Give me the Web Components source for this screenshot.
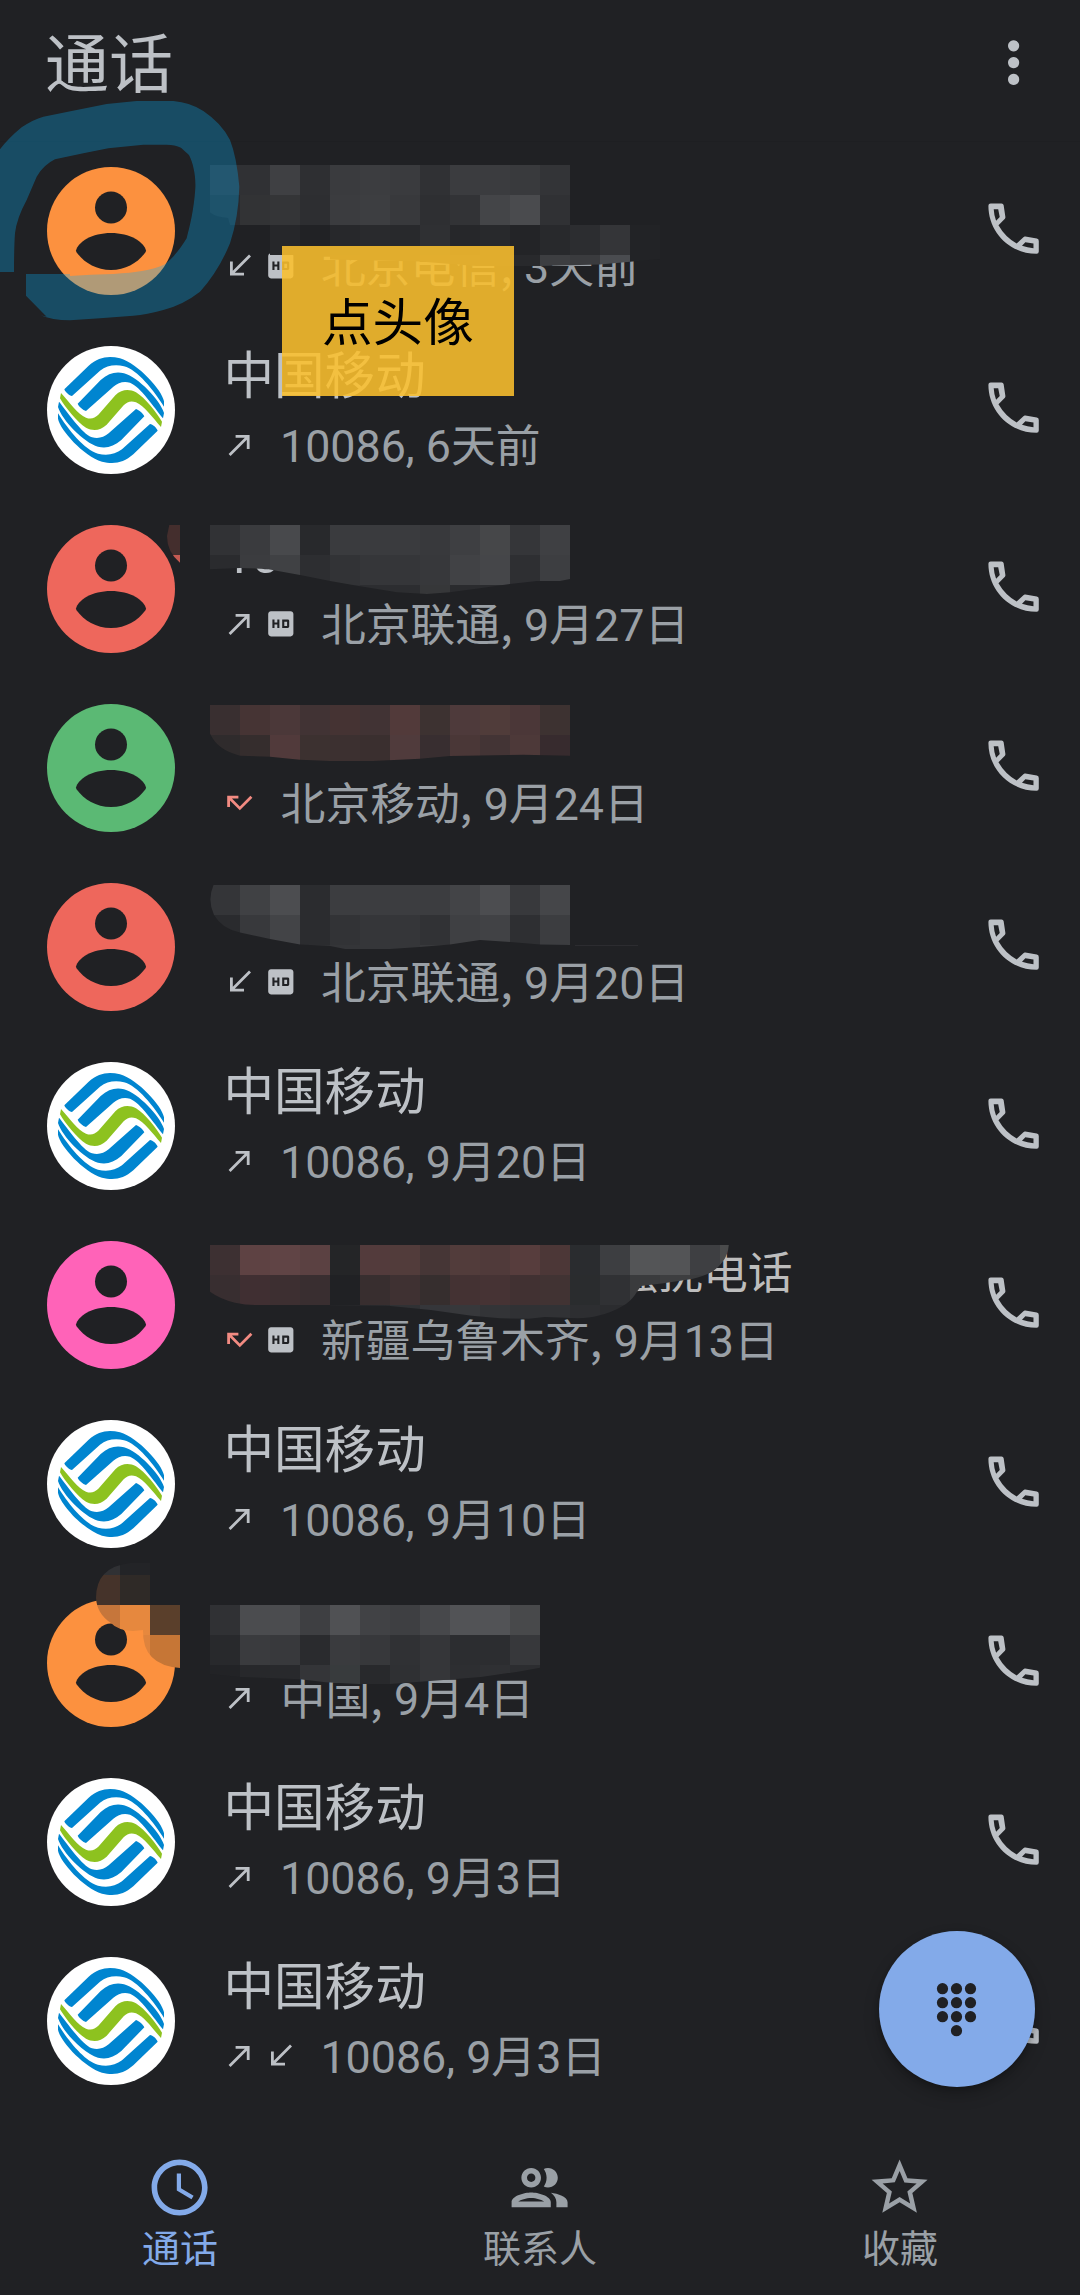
<!DOCTYPE html>
<html lang="zh-CN">
<head>
<meta charset="utf-8">
<title>通话</title>
<style>
  html, body { margin: 0; background: #202124; }
  body { font-family: Roboto, "Noto Sans CJK SC", sans-serif; }
</style>
</head>
<body>
<phone-screen></phone-screen>

<script>
const BG = '#202124';

const ICONS = {
  made: 'M9 5v2h6.59L4 18.59 5.41 20 17 8.41V15h2V5z',
  received: 'M20 5.41L18.59 4 7 15.59V9H5v10h10v-2H8.41z',
  missed: 'M19.59 7L12 14.59 6.41 9H11V7H3v8h2v-4.59l7 7 9-9z',
  hd: 'M19 3H5c-1.1 0-2 .9-2 2v14c0 1.1.9 2 2 2h14c1.1 0 2-.9 2-2V5c0-1.1-.9-2-2-2zm-8 12H9.5v-2.5h-2V15H6V9h1.5v2h2V9H11v6zm2-6h4c.55 0 1 .45 1 1v4c0 .55-.45 1-1 1h-4V9zm1.5 4.5h2v-3h-2v3z',
  phone: 'M3.8 3H7.7Q8.35 3 8.45 3.7L9.07 7.9Q9.1 8.2 8.9 8.45L6.6 10.85Q9 15.1 13.1 17.35L15.5 15.05Q15.8 14.75 16.2 14.85L20.3 15.55Q21 15.7 21 16.4V20.2Q21 21 20.2 21C10.7 21 3 13.3 3 3.8Q3 3 3.8 3ZM4.9 5.1Q5 7.3 5.75 9.2L7.05 7.9 6.5 5.1ZM16.2 16.9L15 18.15Q16.9 18.85 19.1 19V17.35Z',
  more: 'M12 4a2 2 0 1 0 .01 0zM12 10a2 2 0 1 0 .01 0zM12 16a2 2 0 1 0 .01 0z',
  clock: 'M11.99 2C6.47 2 2 6.48 2 12s4.47 10 9.99 10C17.52 22 22 17.52 22 12S17.52 2 11.99 2zM12 20c-4.42 0-8-3.58-8-8s3.58-8 8-8 8 3.58 8 8-3.58 8-8 8zm.5-13H11v6l5.25 3.15.75-1.23-4.5-2.67z',
  people: 'M9 13.75c-2.34 0-7 1.17-7 3.5V19h14v-1.75c0-2.33-4.66-3.5-7-3.5zM4.34 17c.84-.58 2.87-1.25 4.66-1.25s3.82.67 4.66 1.25H4.34zM9 12c1.93 0 3.5-1.57 3.5-3.5S10.93 5 9 5 5.5 6.57 5.5 8.5 7.07 12 9 12zm0-5c.83 0 1.5.67 1.5 1.5S9.83 10 9 10s-1.5-.67-1.5-1.5S8.17 7 9 7zm7.04 6.81c1.16.84 1.96 1.96 1.96 3.44V19h4v-1.75c0-2.02-3.5-3.17-5.96-3.44zM15 12c1.93 0 3.5-1.57 3.5-3.5S16.93 5 15 5c-.54 0-1.04.13-1.5.35.63.89 1 1.98 1 3.15s-.37 2.26-1 3.15c.46.22.96.35 1.5.35z',
  star: 'M22 9.24l-7.19-.62L12 2 9.19 8.63 2 9.24l5.46 4.73L5.82 21 12 17.27 18.18 21l-1.63-7.03L22 9.24zM12 15.4l-3.76 2.27 1-4.28-3.32-2.88 4.38-.38L12 6.1l1.71 4.04 4.38.38-3.32 2.88 1 4.28L12 15.4z'
};

class UiIcon extends HTMLElement {
  connectedCallback() {
    const r = this.attachShadow({ mode: 'open' });
    r.innerHTML = `<style>:host{display:block;width:67.2px;height:67.2px;flex:none}svg{display:block;width:100%;height:100%}</style>
      <svg viewBox="0 0 24 24"><path fill="currentColor" fill-rule="evenodd" d="${ICONS[this.getAttribute('name')]}"/></svg>`;
  }
}

class ContactAvatar extends HTMLElement {
  connectedCallback() {
    const color = this.getAttribute('color');
    const person = `<svg viewBox="0 0 128 128"><circle cx="64" cy="64" r="64" fill="${color}"/>
      <circle cx="64" cy="40.5" r="16" fill="${BG}"/>
      <path fill="${BG}" d="M29 83.5C31 75 45 66 64 66S97 75 99 83.5Q99 84.5 98.3 85.5C91 95.5 79 103 64 103S37 95.5 29.7 85.5Q29 84.5 29 83.5Z"/></svg>`;
    const arcs = `<path d="M193 178L266 107C296 81 325 76 360 85C415 102 486 180 492 214V230C462 182 412 119 372 109C345 102 320 107 300 122L216 198C208 197 196 187 193 178Z"/>
      <path d="M233 221L302 150C325 130 347 124 372 130C415 142 480 210 492 249L489 265C463 233 420 169 390 158C370 153 355 158 340 170L258 243C249 240 236 229 233 221Z"/>`;
    const mobile = `<svg viewBox="141 48 384 384"><circle cx="333" cy="240" r="192" fill="#fff"/>
      <g fill="#0085d0">${arcs}<g transform="rotate(180 333 240)">${arcs}</g></g>
      <path fill="#8dc21f" d="M183 189C210 219 233 252 258 263C274 269 284 264 295 254L346 196C366 177 388 177 408 187C435 203 470 248 486 275L483 291C456 261 433 228 408 217C392 211 382 216 371 226L320 284C300 303 278 303 258 293C231 277 196 232 180 205Z"/></svg>`;
    this.attachShadow({ mode: 'open' }).innerHTML =
      `<style>:host{display:block;width:128px;height:128px;flex:none}svg{display:block}</style>${color ? person : mobile}`;
  }
}

class CallRow extends HTMLElement {
  connectedCallback() {
    const icons = this.getAttribute('icons').split(' ')
      .map(n => `<ui-icon class="${n}" name="${n}"></ui-icon>`).join('');
    const color = this.getAttribute('color') || '';
    this.attachShadow({ mode: 'open' }).innerHTML = `<style>
      :host{display:flex;align-items:center;height:179px;box-sizing:border-box;padding:0 33px 0 47px;color:#bdc1c6}
      .body{flex:1;display:flex;flex-direction:column;padding-left:48.4px;white-space:nowrap}
      .name{height:70px;box-sizing:border-box;padding-top:1.5px;font-size:50.6px;line-height:70px}
      .detail{display:flex;align-items:center;height:70px;font-size:44.8px;line-height:70px;color:#9aa0a6}
      .text{padding-top:3px;white-space:pre}
      .icons{display:flex;gap:6.8px;margin-right:23.6px;color:#bdc1c6}
      :host([number]) .icons{margin-right:23px}
      .icons ui-icon{width:33.6px;height:33.6px}
      .missed{color:#f28b82}
      .call{margin-bottom:5px}
      </style>
      <contact-avatar color="${color}"></contact-avatar>
      <div class="body"><div class="name"><slot name="name"></slot></div>
      <div class="detail"><span class="icons">${icons}</span><span class="text"><slot></slot></span></div></div>
      <ui-icon class="call" name="phone"></ui-icon>`;
  }
}

class AppHeader extends HTMLElement {
  connectedCallback() {
    this.attachShadow({ mode: 'open' }).innerHTML = `<style>
      :host{display:flex;justify-content:space-between;height:141.5px;box-sizing:border-box;padding:0 33px 0 45px;color:#bdc1c6;border-bottom:1px solid #1e1f22}
      .title{font-size:64px;line-height:92px;margin-top:20px}
      ui-icon{margin-top:28.8px}
      </style><span class="title"><slot></slot></span><ui-icon name="more"></ui-icon>`;
  }
}

class NavItem extends HTMLElement {
  connectedCallback() {
    this.attachShadow({ mode: 'open' }).innerHTML = `<style>
      :host{flex:1;display:flex;flex-direction:column;align-items:center;color:#9aa0a6;font-size:38px;line-height:56px}
      :host([active]){color:#83aae9}
      </style><ui-icon name="${this.getAttribute('icon')}"></ui-icon><span><slot></slot></span>`;
  }
}

class BottomNav extends HTMLElement {
  connectedCallback() {
    this.attachShadow({ mode: 'open' }).innerHTML =
      `<style>:host{display:flex;flex:1;padding-top:43px;box-sizing:border-box}</style><slot></slot>`;
  }
}

class DialButton extends HTMLElement {
  connectedCallback() {
    const dots = [[64,58],[78,58],[92,58],[64,72],[78,72],[92,72],[64,86],[78,86],[92,86],[78,100]]
      .map(([x, y]) => `<circle cx="${x - .5}" cy="${y - .3}" r="5.6"/>`).join('');
    this.attachShadow({ mode: 'open' }).innerHTML = `<style>
      :host{display:block;width:156px;height:156px;border-radius:50%;background:#83aae9;box-shadow:0 8px 16px rgba(0,0,0,.22),0 2px 5px rgba(0,0,0,.2)}
      svg{display:block}</style><svg viewBox="0 0 156 156" fill="${BG}">${dots}</svg>`;
  }
}

class NoteLabel extends HTMLElement {
  connectedCallback() {
    this.attachShadow({ mode: 'open' }).innerHTML = `<style>
      :host{display:flex;align-items:center;justify-content:center;box-sizing:border-box;width:231.7px;height:149.7px;padding-top:6px;background:rgba(250,191,45,.88);color:#000;font-size:50.6px;line-height:72px}
      </style><slot></slot>`;
  }
}

/* Pixelated patches: each has an outline and rows of 30px tiles. */
const PATCHES = [
  { d: 'M210 165H570V225H660V259L600 264.5 540 266H476L420 261.5 330 259.5V255H270V225H230L228 218Q216 217 210 212.5Z', rows: [
    [210, 165, '303135 303134 3f4043 2e2f32 3a3b3e 3c3d40 3a3b3e 303134 3b3c3f 3b3c3f 393a3d 333437'],
    [210, 195, '292a2e 323335 343537 2d2e31 3b3c3f 3d3e41 38393c 2e2f32 323336 444548 4a4b4e 303134'],
    [210, 225, '202124 202124 26272a 212225 27282b 292a2d 28292c 2f3033 26272a 28292c 232427 28292c 2c2d30 343538 222326'],
    [270, 255, '202124 202124 28292c 28292c 2a2b2e 303134 2e2f32 28292c 28292c 3d3e41 3a3b3e 4a4c50 222326']] },
  { d: 'M210 525H570V579L560 581H537L510 584 480 588.3 450 592.3 427 594 397 592.3 357 585.7 330 581 300 575 267 569 240 568 210 569.3Z', rows: [
    [210, 525, '313235 3a3b3e 48494c 28292c 3a3b3e 3a3b3e 3a3b3e 38393c 3e3f42 464749 353639 3f4043'],
    [210, 555, '2a2b2e 3b3c3f 404144 2d2e31 323336 353639 353639 37383b 414245 454649 2e2f32 3d3e41'],
    [210, 585, '202124 202124 202124 202124 2e2f32 2c2d30 2c2d30 363739 2a2b2e 2a2b2e 2a2b2e 2a2b2e']] },
  { d: 'M169.3 525H180V562.7Q167 552 167 536Z', rows: [[150, 525, '442e2d'], [150, 555, 'c55a52']] },
  { d: 'M210 705H570V755.7L523 754.7 450 756 420 758.7 373 761H330L300 759.7 270 756.7 240 755.7Q217 750 210 733.5Z', rows: [
    [210, 705, '392f30 463434 4b3839 413334 453333 413334 523a3a 3d3231 4e3a3b 503c3a 4b3738 3d3231'],
    [210, 735, '2f2b2c 352d2d 513a3b 3c3130 3c3030 3a2f2f 503b3c 382e30 4a3737 433435 4d3939 372b2e']] },
  { d: 'M213.5 885H570V945L540 944.5 510 942 480 940 450 944.5 420 947 390 949H345L330 946 300 944.5 270 939 240 932.5Q222 929 214 915 207 900 213.5 885Z', rows: [
    [210, 885, '343538 404144 4c4d50 2b2c2f 3c3d40 3c3d40 3c3d40 3c3d40 434447 4c4d50 38393c 454649'],
    [210, 915, '2a2b2e 38393c 434447 2b2c2f 323336 353639 353639 313235 3f4043 414245 2e2f32 3c3d40'],
    [210, 945, '202124 202124 202124 303134 343538 353639 353639 38393c 303134']] },
  { d: 'M575 945.3H638V946H575Z', rows: [[570, 945, '303134 303134 303134']] },
  { d: 'M210 1245H728.8Q728 1255 722.7 1261.7 718 1268 712.4 1271.7 704 1276 692 1279L663.5 1283.3 641 1286Q638 1290 634.9 1295 630 1302 622.7 1306 611 1313 598 1315.7 590 1318 577.8 1318.3L545 1317 528.8 1318.7 500 1318.3 471.6 1315.7 430.8 1310 390 1306 330 1305.3 255 1305Q245 1305 235 1302.7 220 1299 210 1291.7Z', rows: [
    [210, 1245, '3d3032 5e4243 604445 5b4142 242527 533b3c 523c3b 463636 523c3b 503a3a 573d3d 4c3737 2a2c2f 3d3e41 545557 535456 3e3f42 4a4b4c'],
    [210, 1275, '382e30 402f32 3d2f31 392e30 202124 382e2f 3f3132 362e2e 443233 463334 413132 413333 2a2c2e 303134 3a3b3d 3d3e40 3a3b3d 3a3b3d'],
    [330, 1305, '2a2b2e 2a2b2e 303134 35363a 37383b 333437 303134 313235 2d2e31 2b2c2f']] },
  { d: 'M210 1605H540V1667.7L518 1671.7 481 1677 440 1680.3 390 1684H359L325.5 1682.3 300 1679.3 240 1677 210 1674Z', rows: [
    [210, 1605, '303134 4b4c4f 4b4c4f 3e3f42 505154 414245 3e3f42 47484b 525356 525356 48494b'],
    [210, 1635, '28292c 3a3b3e 38393c 2a2b2e 3a3b3e 37383b 303134 353639 2c2d30 2c2d30 37383b'],
    [210, 1665, '222326 27282b 28292c 343538 383b3d 28292c 2f3033 353639 2d2e31 2f3033 2c2d30']] },
  { d: 'M180 1563H130Q96 1567 96 1598 97 1614 111 1623 117 1630 133 1631L143 1630Q142 1665 180 1668Z', rows: [
    [90, 1545, '303134 232427 202124'], [90, 1575, '45332a 2f2a27 202124'],
    [90, 1605, 'c6763b e6883e 5a3f2b'], [90, 1635, 'de833d de833d c67636'], [150, 1665, 'c67636']] }
];

/* Freehand marker ring, drawn at three times the page scale. */
const RING = 'M0 448Q25 415 65 382 100 358 130 350L215 333 320 312 410 303H520Q570 307 610 333 665 370 690 420 710 470 718 560 716 650 690 730 655 815 600 875 550 914 490 930 440 944 400 947L300 955 210 961Q155 961 122 946L140 950 78 887V822H210V828Q270 824 340 822C410 818 460 810 495 793C525 768 545 740 560 715C568 685 582 630 586 565C588 530 580 490 567 465L543 443Q525 434 500 434H430L325 445 250 460 165 478Q130 495 110 530L80 600Q50 655 45 700 42 740 42 816H0Z';

class MarkupLayer extends HTMLElement {
  connectedCallback() {
    const svg = PATCHES.map((p, i) => {
      const tiles = p.rows.map(([x, y, c]) => c.split(' ')
        .map((f, k) => `<rect x="${x + 30 * k}" y="${y}" width="30" height="30" fill="#${f}"/>`).join('')).join('');
      return `<clipPath id="p${i}"><path d="${p.d}"/></clipPath><g clip-path="url(#p${i})" shape-rendering="crispEdges">${tiles}</g>`;
    }).join('');
    this.attachShadow({ mode: 'open' }).innerHTML = `<style>:host{display:block}svg{display:block}</style>
      <svg width="1080" height="2295" viewBox="0 0 1080 2295">${svg}
      <path transform="scale(.33333)" fill="rgba(6,175,246,.31)" d="${RING}"/></svg>`;
  }
}

const mobileRow = (icons, text) =>
  `<call-row number icons="${icons}"><span slot="name">中国移动</span>${text}</call-row>`;
const place = (name, date) => `${name}<span class="sep">, </span>${date}`;

class PhoneScreen extends HTMLElement {
  connectedCallback() {
    this.attachShadow({ mode: 'open' }).innerHTML = `<style>
      :host{display:flex;flex-direction:column;position:relative;width:1080px;height:2295px;overflow:hidden;background:${BG}}
      markup-layer{position:absolute;left:0;top:0;pointer-events:none}
      note-label{position:absolute;left:282px;top:246px}
      dial-button{position:absolute;left:879px;top:1931px}
      .sep{font-family:"Noto Sans CJK SC",sans-serif;line-height:1px;padding-right:1.4px}
      .spam{display:block;padding:2px 0 0 390px;color:#bdbdbd;font-size:44.8px}
      </style>
      <app-header>通话</app-header>
      <main>
        <call-row icons="received hd" color="#fc913f">${place('北京电信', '3天前')}</call-row>
        ${mobileRow('made', '10086, 6天前')}
        <call-row icons="made hd" color="#ee675c"><span slot="name">10</span>${place('北京联通', '9月27日')}</call-row>
        <call-row icons="missed" color="#5bb974">${place('北京移动', '9月24日')}</call-row>
        <call-row icons="received hd" color="#ee675c">${place('北京联通', '9月20日')}</call-row>
        ${mobileRow('made', '10086, 9月20日')}
        <call-row icons="missed hd" color="#ff63b8"><span slot="name" class="spam">骚扰电话</span>${place('新疆乌鲁木齐', '9月13日')}</call-row>
        ${mobileRow('made', '10086, 9月10日')}
        <call-row icons="made" color="#fc913f">${place('中国', '9月4日')}</call-row>
        ${mobileRow('made', '10086, 9月3日')}
        ${mobileRow('made received', '10086, 9月3日')}
      </main>
      <bottom-nav>
        <nav-item icon="clock" active>通话</nav-item>
        <nav-item icon="people">联系人</nav-item>
        <nav-item icon="star">收藏</nav-item>
      </bottom-nav>
      <markup-layer></markup-layer>
      <note-label>点头像</note-label>
      <dial-button></dial-button>`;
  }
}

customElements.define('ui-icon', UiIcon);
customElements.define('contact-avatar', ContactAvatar);
customElements.define('call-row', CallRow);
customElements.define('app-header', AppHeader);
customElements.define('nav-item', NavItem);
customElements.define('bottom-nav', BottomNav);
customElements.define('dial-button', DialButton);
customElements.define('note-label', NoteLabel);
customElements.define('markup-layer', MarkupLayer);
customElements.define('phone-screen', PhoneScreen);
</script>
</body>
</html>
